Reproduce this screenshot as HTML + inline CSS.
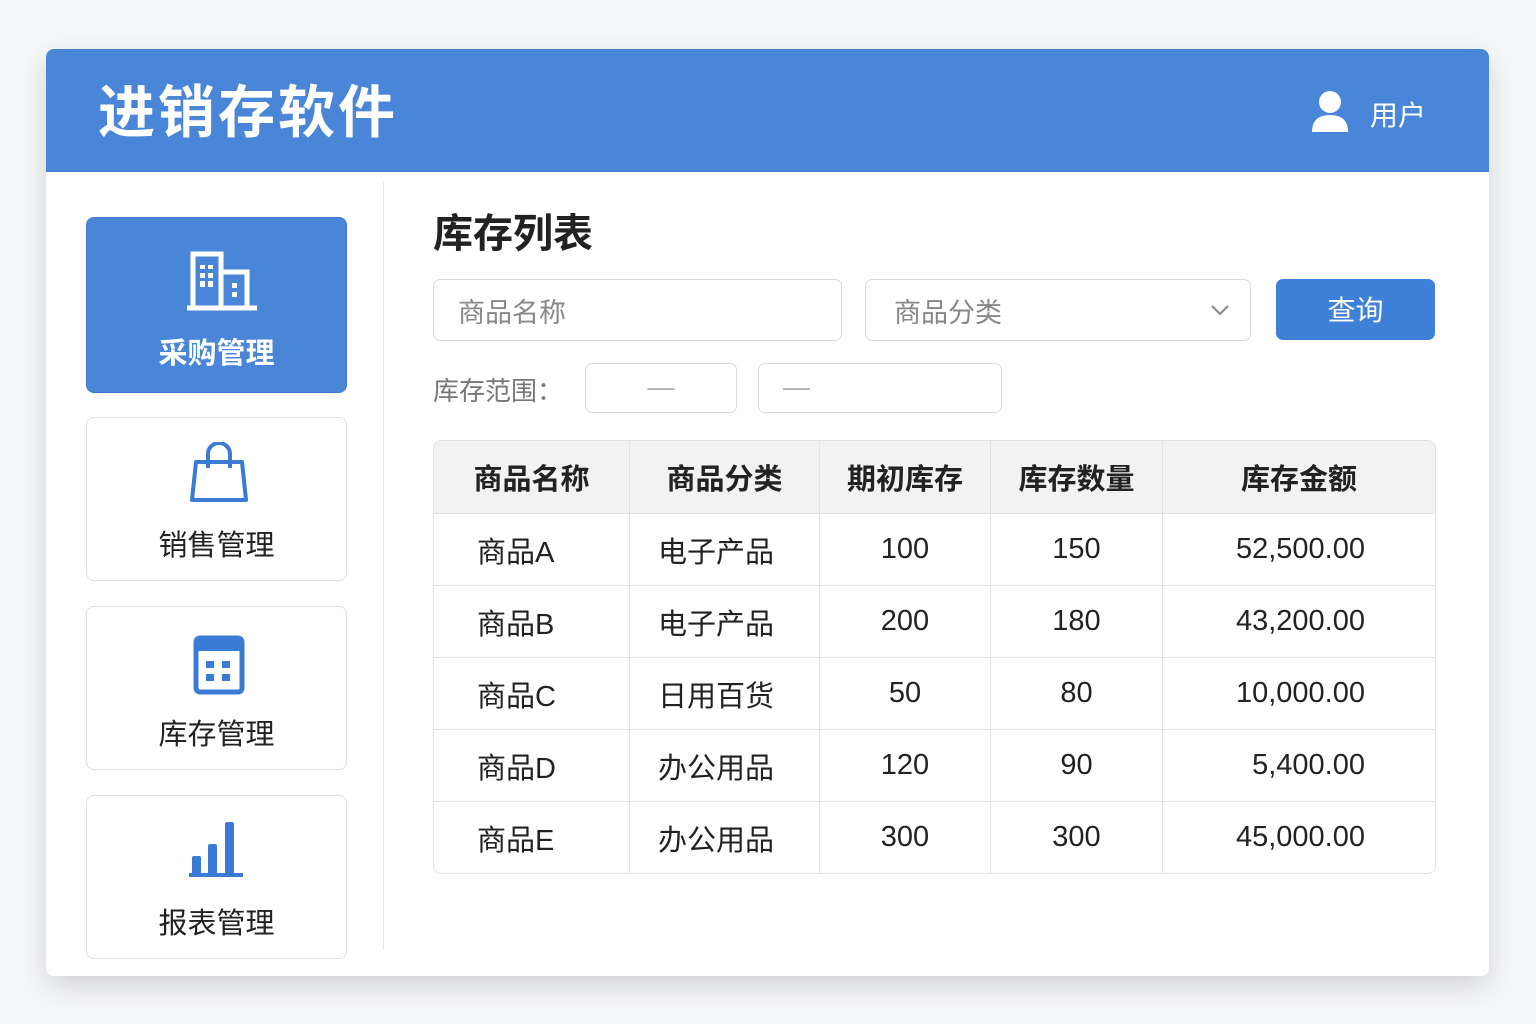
<!DOCTYPE html>
<html><head><meta charset="utf-8"><style>
body{margin:0;width:1536px;height:1024px;background:#f6f7f9;font-family:"Liberation Sans","Noto Sans CJK SC",sans-serif;position:relative;overflow:hidden}
.card{position:absolute;left:46px;top:49px;width:1443px;height:927px;background:#fff;border-radius:8px;box-shadow:0 10px 30px rgba(0,0,0,.15);overflow:hidden}
.hdr{position:absolute;left:0;top:0;width:100%;height:123px;background:#4a86d8}
.abs{position:absolute}
.nav{position:absolute;left:40px;width:261px;border:1px solid #dedede;border-radius:8px;background:#fff;text-align:center;box-sizing:border-box}
.nav .lb{position:absolute;left:0;right:0;font-size:29px;color:#222}
.inp{position:absolute;border:1px solid #d9d9d9;border-radius:7px;box-sizing:border-box;color:#888;font-size:27px}
.tw{position:absolute;left:387px;top:391px;width:1001px;border:1px solid #e2e2e2;border-radius:8px;overflow:hidden}
table{width:100%;border-collapse:collapse;font-size:29px;color:#222}
td,th{border:1px solid #e2e2e2;height:71px;padding:0}
tr:first-child th{border-top:none}
tr:last-child td{border-bottom:none}
td:first-child,th:first-child{border-left:none}
td:last-child,th:last-child{border-right:none}
th{background:#f2f2f2;font-weight:bold;height:72px}
</style></head><body>
<div class="card">
<div class="hdr"></div>
<div class="abs" style="left:52px;top:18px;font-size:57px;font-weight:bold;color:#fff;letter-spacing:3px">进销存软件</div>
<svg class="abs" style="left:1264px;top:40px" width="40" height="44" viewBox="0 0 40 44"><circle cx="20" cy="13" r="11" fill="#fff"/><path d="M2 43 Q2 26 20 26 Q38 26 38 43Z" fill="#fff"/></svg>
<div class="abs" style="left:1324px;top:45px;font-size:28px;color:#fff">用户</div>
<div class="abs" style="left:337px;top:133px;width:1px;height:768px;background:#e5e5e5"></div>

<div class="nav" style="top:168px;height:176px;background:#4a86d8;border-color:#3f7bcf">
<svg class="abs" style="left:100px;top:30px" width="70" height="64" viewBox="0 0 70 64"><path d="M6 58V6h28v52M34 58V24h26v34" fill="none" stroke="#fff" stroke-width="5"/><path d="M0 60h70" stroke="#fff" stroke-width="5"/><g fill="#fff"><rect x="13" y="17" width="5" height="4"/><rect x="21" y="17" width="5" height="4"/><rect x="13" y="25" width="5" height="5"/><rect x="21" y="25" width="5" height="5"/><rect x="13" y="33" width="5" height="6"/><rect x="21" y="33" width="5" height="6"/><rect x="45" y="35" width="5" height="5"/><rect x="45" y="44" width="5" height="5"/></g></svg>
<div class="lb" style="top:112px;color:#fff;font-weight:bold">采购管理</div></div>

<div class="nav" style="top:368px;height:164px">
<svg class="abs" style="left:102px;top:24px" width="60" height="62" viewBox="0 0 60 62"><path d="M7 20h46l4 38H3z" fill="none" stroke="#3a7bd5" stroke-width="4" stroke-linejoin="round"/><path d="M19 26V12a11 11 0 0 1 22 0v14" fill="none" stroke="#3a7bd5" stroke-width="4"/></svg>
<div class="lb" style="top:104px">销售管理</div></div>

<div class="nav" style="top:557px;height:164px">
<svg class="abs" style="left:106px;top:28px" width="52" height="60" viewBox="0 0 52 60"><rect x="3" y="3" width="46" height="54" rx="4" fill="none" stroke="#3a7bd5" stroke-width="5"/><rect x="3" y="3" width="46" height="13" fill="#3a7bd5"/><g fill="#3a7bd5"><rect x="13" y="26" width="8" height="7"/><rect x="29" y="26" width="8" height="7"/><rect x="13" y="39" width="8" height="7"/><rect x="29" y="39" width="8" height="7"/></g></svg>
<div class="lb" style="top:104px">库存管理</div></div>

<div class="nav" style="top:746px;height:164px">
<svg class="abs" style="left:102px;top:24px" width="56" height="60" viewBox="0 0 56 60"><g fill="#3a7bd5"><rect x="3" y="36" width="9" height="20" rx="2"/><rect x="19" y="24" width="9" height="32" rx="2"/><rect x="36" y="2" width="9" height="54" rx="2"/><rect x="0" y="53" width="54" height="4"/></g></svg>
<div class="lb" style="top:104px">报表管理</div></div>

<div class="abs" style="left:387px;top:152px;font-size:40px;font-weight:bold;color:#222">库存列表</div>
<div class="inp" style="left:387px;top:230px;width:409px;height:62px;padding:11px 24px">商品名称</div>
<div class="inp" style="left:819px;top:230px;width:386px;height:62px;padding:11px 28px">商品分类
<svg class="abs" style="left:344px;top:24px" width="20" height="12" viewBox="0 0 20 12"><path d="M2 2l8 8 8-8" fill="none" stroke="#888" stroke-width="2"/></svg></div>
<div class="abs" style="left:1230px;top:230px;width:159px;height:61px;background:#3f80d8;border-radius:7px;color:#fff;font-size:28px;text-align:center;line-height:64px">查询</div>
<div class="abs" style="left:387px;top:322px;font-size:26px;color:#777">库存范围：</div>
<div class="inp" style="left:539px;top:314px;width:152px;height:50px;text-align:center;line-height:46px;color:#aaa">—</div>
<div class="inp" style="left:712px;top:314px;width:244px;height:50px;padding-left:24px;line-height:46px;color:#aaa">—</div>

<div class="tw"><table>
<tr><th style="width:195px">商品名称</th><th style="width:189px">商品分类</th><th style="width:170px">期初库存</th><th style="width:171px">库存数量</th><th>库存金额</th></tr>
<tr><td style="padding-left:43px">商品A</td><td style="padding-left:28px">电子产品</td><td align=center>100</td><td align=center>150</td><td align=right style="padding-right:70px">52,500.00</td></tr>
<tr><td style="padding-left:43px">商品B</td><td style="padding-left:28px">电子产品</td><td align=center>200</td><td align=center>180</td><td align=right style="padding-right:70px">43,200.00</td></tr>
<tr><td style="padding-left:43px">商品C</td><td style="padding-left:28px">日用百货</td><td align=center>50</td><td align=center>80</td><td align=right style="padding-right:70px">10,000.00</td></tr>
<tr><td style="padding-left:43px">商品D</td><td style="padding-left:28px">办公用品</td><td align=center>120</td><td align=center>90</td><td align=right style="padding-right:70px">5,400.00</td></tr>
<tr><td style="padding-left:43px">商品E</td><td style="padding-left:28px">办公用品</td><td align=center>300</td><td align=center>300</td><td align=right style="padding-right:70px">45,000.00</td></tr>
</table></div>
</div>
</body></html>
